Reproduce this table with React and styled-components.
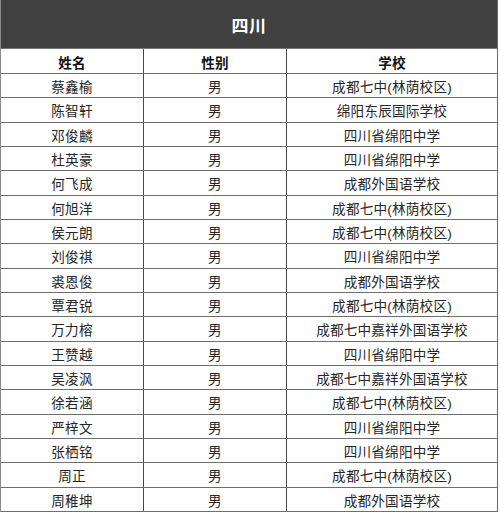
import React from "react";
import styled, { createGlobalStyle } from "styled-components";

const Global = createGlobalStyle`
  html, body { margin: 0; padding: 0; background: #fff; }
  body { font-family: "Liberation Sans", "Noto Sans CJK SC", sans-serif; }
`;

const Table = styled.div`
  width: 498px;
  box-sizing: border-box;
  border-left: 1px solid #8a8a8a;
  border-right: 1px solid #6a6a6a;
  background: #fff;
`;

const Title = styled.div`
  height: 48px;
  background: #404040;
  color: #fff;
  font-size: 17px;
  font-weight: bold;
  display: flex;
  align-items: center;
  justify-content: center;
  border-bottom: 1px solid #777;
  letter-spacing: 0.5px;
`;

const Row = styled.div`
  display: grid;
  grid-template-columns: 142px 143px 1fr;
  height: ${(p) => p.$h}px;
  box-sizing: border-box;
  border-bottom: 1px solid #6e6e6e;
`;

const Cell = styled.div`
  display: flex;
  align-items: center;
  justify-content: center;
  font-size: 13.6px;
  letter-spacing: 0.2px;
  color: ${(p) => (p.$head ? "#111" : "#262626")};
  font-weight: ${(p) => (p.$head ? "bold" : "normal")};
  border-left: ${(p) => (p.$first ? "none" : "1px solid #4a4a4a")};
  white-space: nowrap;
  padding-top: 1px;
`;

const rows = [
  ["蔡鑫榆", "男", "成都七中(林荫校区)"],
  ["陈智轩", "男", "绵阳东辰国际学校"],
  ["邓俊麟", "男", "四川省绵阳中学"],
  ["杜英豪", "男", "四川省绵阳中学"],
  ["何飞成", "男", "成都外国语学校"],
  ["何旭洋", "男", "成都七中(林荫校区)"],
  ["侯元朗", "男", "成都七中(林荫校区)"],
  ["刘俊祺", "男", "四川省绵阳中学"],
  ["裘恩俊", "男", "成都外国语学校"],
  ["覃君锐", "男", "成都七中(林荫校区)"],
  ["万力榕", "男", "成都七中嘉祥外国语学校"],
  ["王赞越", "男", "四川省绵阳中学"],
  ["吴凌沨", "男", "成都七中嘉祥外国语学校"],
  ["徐若涵", "男", "成都七中(林荫校区)"],
  ["严梓文", "男", "四川省绵阳中学"],
  ["张栖铭", "男", "四川省绵阳中学"],
  ["周正", "男", "成都七中(林荫校区)"],
  ["周稚坤", "男", "成都外国语学校"],
];

export default function App() {
  return (
    <>
      <Global />
      <Table>
        <Title>四川</Title>
        <Row $h={25}>
          <Cell $head $first>姓名</Cell>
          <Cell $head>性别</Cell>
          <Cell $head>学校</Cell>
        </Row>
        {rows.map((r, i) => (
          <Row key={i} $h={24.33}>
            <Cell $first>{r[0]}</Cell>
            <Cell>{r[1]}</Cell>
            <Cell>{r[2]}</Cell>
          </Row>
        ))}
      </Table>
    </>
  );
}
